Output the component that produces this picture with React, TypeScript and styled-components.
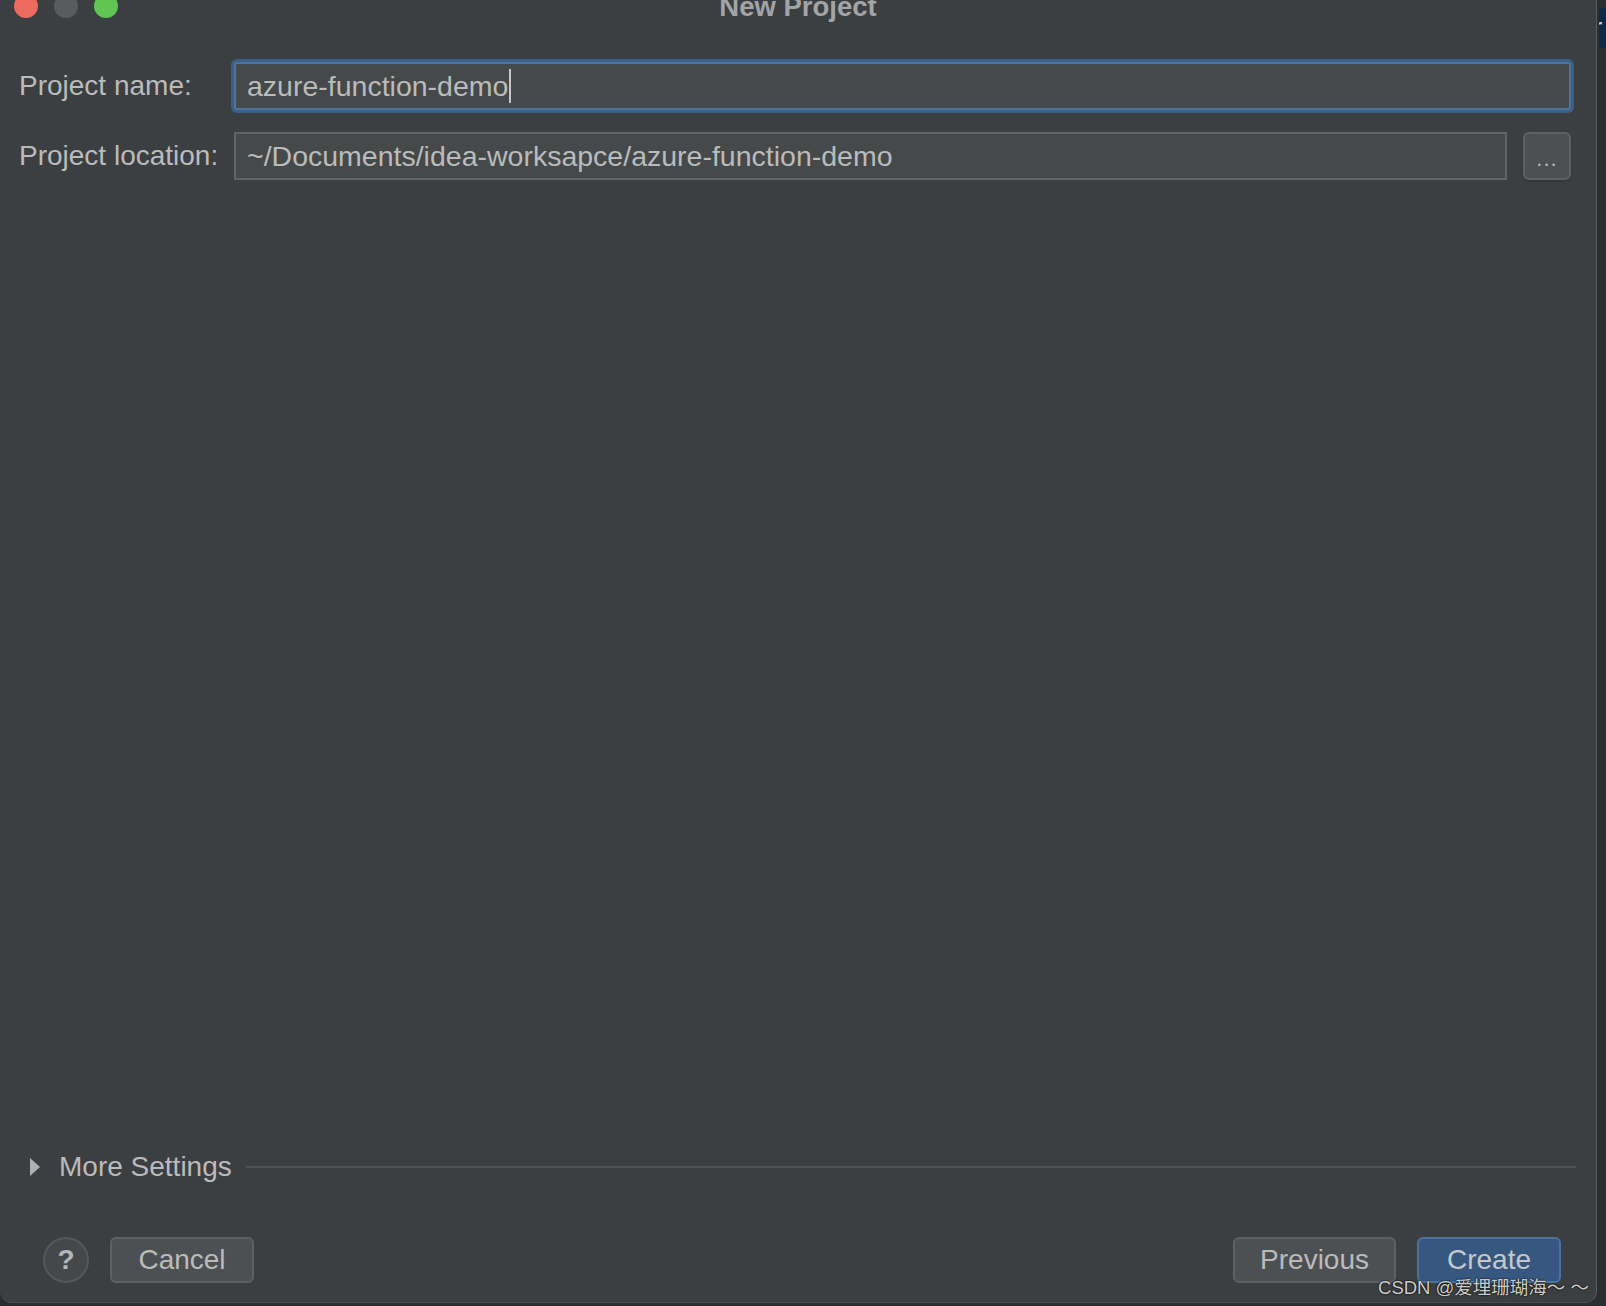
import React from 'react';
import styled, { createGlobalStyle } from 'styled-components';

const GlobalStyle = createGlobalStyle`
  html, body {
    margin: 0;
    padding: 0;
    background: #2b2d30;
    overflow: hidden;
  }
  * {
    box-sizing: border-box;
  }
`;

const FONT = `"Liberation Sans", Arial, "Noto Sans CJK SC", sans-serif`;

const Page = styled.div`
  display: flex;
  width: 1606px;
  height: 1306px;
  overflow: hidden;
  font-family: ${FONT};
`;

const Window = styled.div`
  position: relative;
  display: flex;
  flex-direction: column;
  width: 1597px;
  height: 1325px;
  margin-top: -22px;
  flex-shrink: 0;
  background: #3c3f41;
  border-right: 1px solid #5a5d60;
  border-bottom: 1px solid #4a4d50;
  border-radius: 12px;
  color: #bbbbbb;
`;

const TitleBar = styled.div`
  display: grid;
  grid-template-columns: 1fr auto 1fr;
  align-items: center;
  height: 56px;
  padding: 0 14px;
`;

const Lights = styled.div`
  display: flex;
  gap: 16px;
`;

const Light = styled.span<{ $color: string }>`
  width: 24px;
  height: 24px;
  border-radius: 50%;
  background: ${(p) => p.$color};
`;

const Title = styled.div`
  font-size: 27.5px;
  font-weight: bold;
  line-height: 1;
  color: #a2a4a7;
  padding-top: 2px;
`;

const Form = styled.div`
  display: grid;
  grid-template-columns: 199px 1fr 48px;
  column-gap: 16px;
  row-gap: 22px;
  align-items: center;
  padding: 28px 25px 0 19px;
`;

const Label = styled.div`
  font-size: 28px;
  color: #bbbbbb;
  white-space: nowrap;
`;

const Field = styled.div<{ $focused?: boolean }>`
  grid-column: ${(p) => (p.$focused ? '2 / 4' : '2 / 3')};
  display: flex;
  align-items: center;
  height: 48px;
  padding-left: 11px;
  background: #45494a;
  border: 2px solid ${(p) => (p.$focused ? '#4b74a0' : '#646464')};
  border-radius: ${(p) => (p.$focused ? '3px' : '0')};
  box-shadow: ${(p) => (p.$focused ? '0 0 0 3px #3b5f87' : 'none')};
  font-size: 28.5px;
  color: #bbbbbb;
  white-space: nowrap;
`;

const Caret = styled.span`
  display: inline-block;
  width: 2px;
  height: 34px;
  margin-left: 1px;
  background: #c8c8c8;
`;

const BrowseButton = styled.div`
  display: flex;
  align-items: center;
  justify-content: center;
  width: 48px;
  height: 48px;
  padding-top: 6px;
  background: #4c5052;
  border: 2px solid #5e6163;
  border-radius: 6px;
  box-shadow: 0 2px 2px rgba(0, 0, 0, 0.15);
  font-size: 22px;
  letter-spacing: 1px;
  color: #bbbbbb;
`;

const Spacer = styled.div`
  flex: 1;
`;

const MoreSettings = styled.div`
  display: flex;
  align-items: center;
  height: 28px;
  padding: 0 20px 0 30px;
`;

const Triangle = styled.span`
  width: 0;
  height: 0;
  border-top: 9px solid transparent;
  border-bottom: 9px solid transparent;
  border-left: 10px solid #aeb0b2;
`;

const SectionTitle = styled.span`
  margin-left: 19px;
  font-size: 28px;
  color: #bbbbbb;
`;

const Rule = styled.span`
  flex: 1;
  height: 2px;
  margin-left: 14px;
  background: #505356;
`;

const Footer = styled.div`
  display: flex;
  align-items: center;
  gap: 21px;
  padding: 56px 35px 19px 43px;
`;

const HelpButton = styled.div`
  display: flex;
  align-items: center;
  justify-content: center;
  width: 46px;
  height: 46px;
  border-radius: 50%;
  background: #45484b;
  border: 2px solid #55585b;
  font-size: 28px;
  font-weight: bold;
  color: #b4b6b8;
`;

const Button = styled.div<{ $primary?: boolean }>`
  display: flex;
  align-items: center;
  justify-content: center;
  min-width: 144px;
  height: 46px;
  padding: 0 25px;
  border-radius: 6px;
  background: ${(p) => (p.$primary ? '#365880' : '#4c5052')};
  border: 2px solid ${(p) => (p.$primary ? '#4a71a0' : '#5e6163')};
  font-size: 28px;
  color: ${(p) => (p.$primary ? '#c4c8cc' : '#bbbbbb')};
`;

const Watermark = styled.div`
  position: absolute;
  right: 7px;
  bottom: 3px;
  font-size: 18.5px;
  color: rgba(232, 232, 232, 0.9);
  text-shadow: 0 0 2px #000, 0 0 1px #000;
  white-space: nowrap;
`;

const Backdrop = styled.div`
  flex: 1;
  padding: 8px 0 0 2px;
  background: #2b2d30;
`;

const BackdropTab = styled.div`
  height: 40px;
  overflow: hidden;
  background: #0f2a45;
  font-size: 28px;
  line-height: 40px;
  color: #c8c8c8;
  text-indent: -6px;
`;

export default function App() {
  return (
    <>
      <GlobalStyle />
      <Page>
        <Window>
          <TitleBar>
            <Lights>
              <Light $color="#ed6a5e" />
              <Light $color="#595b5e" />
              <Light $color="#61c554" />
            </Lights>
            <Title>New Project</Title>
          </TitleBar>

          <Form>
            <Label>Project name:</Label>
            <Field $focused>
              azure-function-demo
              <Caret />
            </Field>
            <Label>Project location:</Label>
            <Field>~/Documents/idea-worksapce/azure-function-demo</Field>
            <BrowseButton>...</BrowseButton>
          </Form>

          <Spacer />

          <MoreSettings>
            <Triangle />
            <SectionTitle>More Settings</SectionTitle>
            <Rule />
          </MoreSettings>

          <Footer>
            <HelpButton>?</HelpButton>
            <Button>Cancel</Button>
            <Spacer />
            <Button>Previous</Button>
            <Button $primary>Create</Button>
          </Footer>

          <Watermark>CSDN @爱埋珊瑚海～ ～</Watermark>
        </Window>
        <Backdrop>
          <BackdropTab>r</BackdropTab>
        </Backdrop>
      </Page>
    </>
  );
}
